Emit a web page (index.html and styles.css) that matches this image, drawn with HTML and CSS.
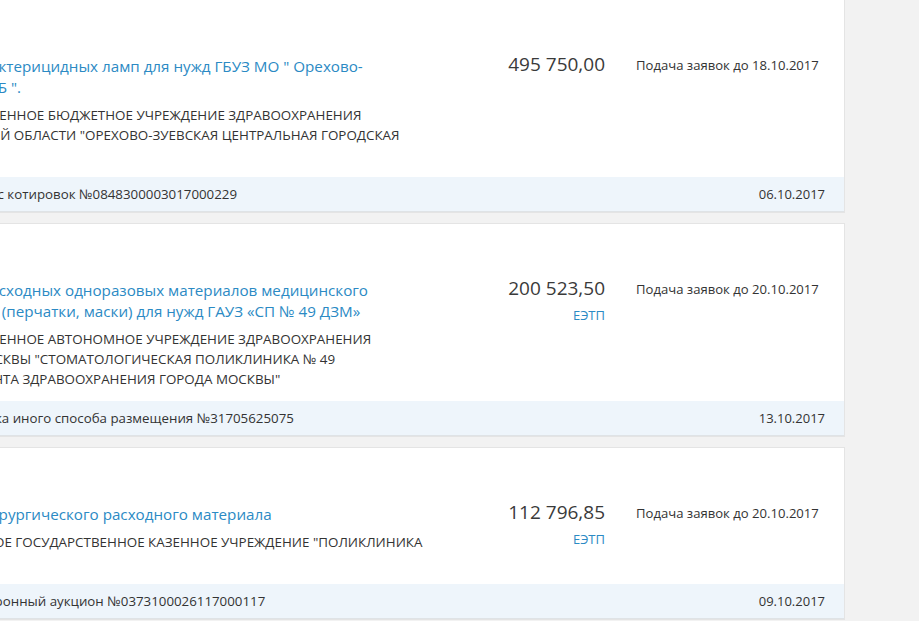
FILE: index.html
```html
<!DOCTYPE html>
<html lang="ru">
<head>
<meta charset="utf-8">
<title>Закупки</title>
<link rel="stylesheet" href="styles.css">
</head>
<body>
<div class="page">
  <div class="list">
    <div class="card">
      <div class="card-body">
        <div class="main">
          <a class="title" href="#">Поставка бактерицидных ламп для нужд ГБУЗ МО " Орехово-<br>Зуевская ЦГБ ".</a>
          <div class="org">ГОСУДАРСТВЕННОЕ БЮДЖЕТНОЕ УЧРЕЖДЕНИЕ ЗДРАВООХРАНЕНИЯ<br>МОСКОВСКОЙ ОБЛАСТИ "ОРЕХОВО-ЗУЕВСКАЯ ЦЕНТРАЛЬНАЯ ГОРОДСКАЯ<br>БОЛЬНИЦА"</div>
        </div>
        <div class="price-col">
          <div class="price">495 750,00</div>
        </div>
        <div class="deadline">Подача заявок до 18.10.2017</div>
      </div>
      <div class="card-foot">
        <span class="kind">Запрос котировок №0848300003017000229</span>
        <span class="date">06.10.2017</span>
      </div>
    </div>

    <div class="card">
      <div class="card-body">
        <div class="main">
          <a class="title" href="#">Поставка расходных одноразовых материалов медицинского<br>назначения (перчатки, маски) для нужд ГАУЗ «СП № 49 ДЗМ»</a>
          <div class="org">ГОСУДАРСТВЕННОЕ АВТОНОМНОЕ УЧРЕЖДЕНИЕ ЗДРАВООХРАНЕНИЯ<br>ГОРОДА МОСКВЫ "СТОМАТОЛОГИЧЕСКАЯ ПОЛИКЛИНИКА № 49<br>ДЕПАРТАМЕНТА ЗДРАВООХРАНЕНИЯ ГОРОДА МОСКВЫ"</div>
        </div>
        <div class="price-col">
          <div class="price">200 523,50</div>
          <a class="etp" href="#">ЕЭТП</a>
        </div>
        <div class="deadline">Подача заявок до 20.10.2017</div>
      </div>
      <div class="card-foot">
        <span class="kind">Закупка иного способа размещения №31705625075</span>
        <span class="date">13.10.2017</span>
      </div>
    </div>

    <div class="card">
      <div class="card-body">
        <div class="main">
          <a class="title" href="#">Поставка хирургического расходного материала</a>
          <div class="org">ФЕДЕРАЛЬНОЕ ГОСУДАРСТВЕННОЕ КАЗЕННОЕ УЧРЕЖДЕНИЕ "ПОЛИКЛИНИКА<br>№ 1"</div>
        </div>
        <div class="price-col">
          <div class="price">112 796,85</div>
          <a class="etp" href="#">ЕЭТП</a>
        </div>
        <div class="deadline">Подача заявок до 20.10.2017</div>
      </div>
      <div class="card-foot">
        <span class="kind">Электронный аукцион №0373100026117000117</span>
        <span class="date">09.10.2017</span>
      </div>
    </div>
  </div>
</div>
</body>
</html>
```

FILE: styles.css
```css
html, body {
  margin: 0;
  padding: 0;
  background: #f2f2f2;
  overflow: hidden;
}
body {
  font-family: "Open Sans", "Noto Sans", sans-serif;
  color: #333;
}
.page {
  width: 919px;
  height: 621px;
  overflow: hidden;
}
.list {
  margin-left: -115px;
  margin-top: -1px;
  width: 960px;
  display: flex;
  flex-direction: column;
  gap: 10px;
}
.card {
  background: #fff;
  border: 1px solid #e4e4e4;
}
.card-body {
  display: flex;
  align-items: flex-start;
  padding: 56px 19px 12px 23px;
}
.main {
  flex: 1;
  min-width: 0;
  white-space: nowrap;
}
.title {
  display: block;
  color: #2b8ac4;
  text-decoration: none;
  font-size: 15.2px;
  line-height: 21px;
}
.org {
  margin-top: 7px;
  margin-left: 6px;
  font-size: 13.4px;
  line-height: 20px;
  color: #333;
}
.price-col {
  width: 160px;
  margin-right: 31px;
  display: flex;
  flex-direction: column;
  align-items: flex-end;
}
.price {
  margin-top: -4px;
  font-size: 19px;
  line-height: 24px;
  color: #3a3a3a;
}
.etp {
  margin-top: 6px;
  font-size: 13px;
  line-height: 18px;
  color: #2b8ac4;
  text-decoration: none;
}
.deadline {
  width: 189px;
  font-size: 13.1px;
  line-height: 21px;
  margin-top: -1px;
  white-space: nowrap;
}
.card-foot {
  display: flex;
  justify-content: space-between;
  align-items: center;
  height: 34px;
  padding: 0 19px 0 72px;
  background: #eef5fb;
  border-bottom: 1px solid #dfe3e6;
  font-size: 13.3px;
  color: #333;
  white-space: nowrap;
}
.date {
  font-size: 13px;
}
```
